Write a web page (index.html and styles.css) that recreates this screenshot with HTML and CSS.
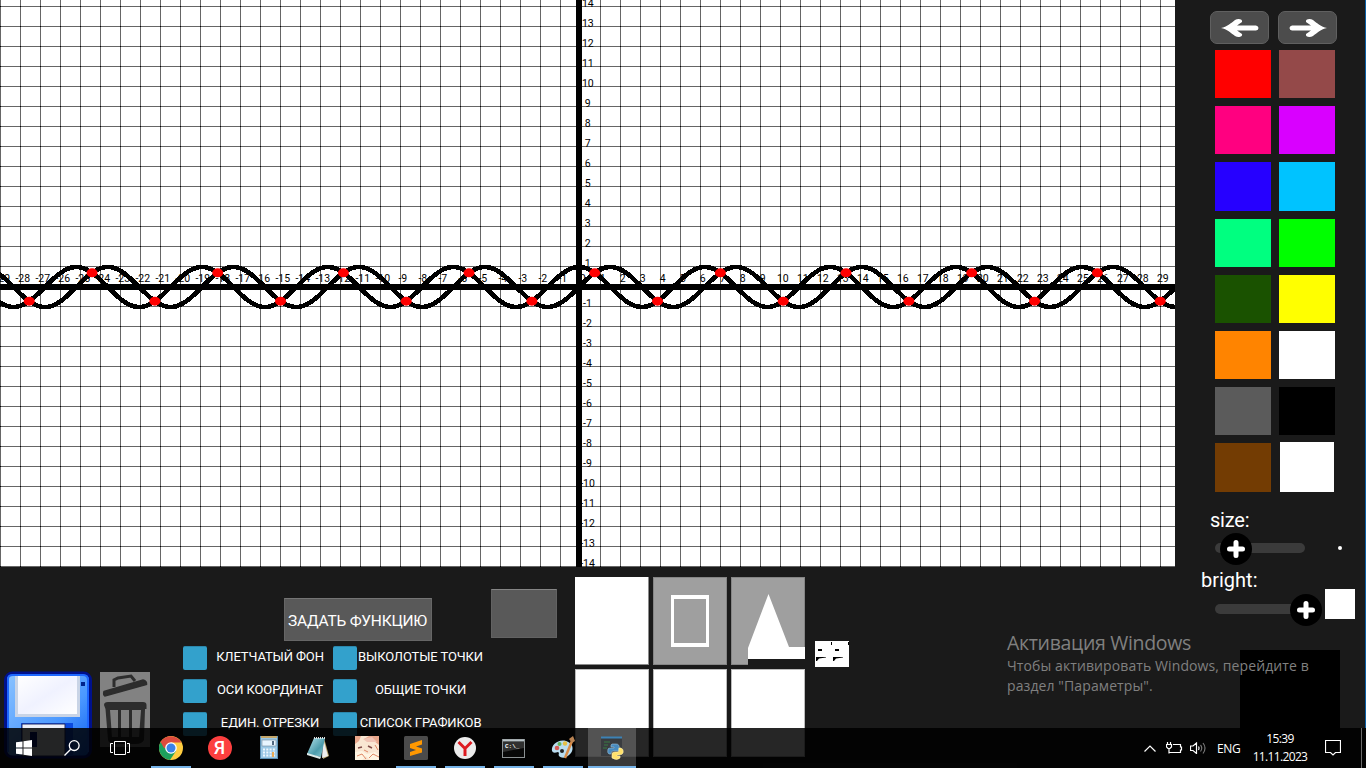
FILE: index.html
```html
<!DOCTYPE html>
<html lang="ru">
<head>
<meta charset="utf-8">
<title>Графики функций</title>
<link rel="stylesheet" href="styles.css">
</head>
<body>
<div class="screen">
  <main class="workspace">
    <svg class="plot" id="plot" width="1175" height="567" viewBox="0 0 1175 567">
      <defs>
        <pattern id="cell" width="20" height="20" patternUnits="userSpaceOnUse" y="6">
          <rect width="20" height="1" class="grid-line"/>
          <rect width="1" height="20" class="grid-line"/>
          <rect width="1" height="1"/>
        </pattern>
      </defs>
      <rect width="1175" height="567" fill="#fff"/>
      <rect width="1175" height="567" fill="url(#cell)"/>
      <rect x="576" width="6" height="567"/>
      <rect y="284" width="1175" height="6"/>
      <g id="labels" class="axis-label"></g>
      <path id="sine" class="curve"/>
      <path id="cosine" class="curve"/>
      <g id="points" class="point"></g>
    </svg>
    <aside class="palette">
      <div class="history">
        <button class="history-btn"><svg width="38" height="20" viewBox="0 0 38 20"><path d="M0 10C6 9 10 5 14 2C17 0 22 1 21 4L16 7.500H35Q37.500 8 37.500 10T35 12.500H16L21 16C22 19 17 20 14 18C10 15 6 11 0 10Z"/></svg></button>
        <button class="history-btn"><svg width="38" height="20" viewBox="0 0 38 20"><path transform="matrix(-1 0 0 1 38 0)" d="M0 10C6 9 10 5 14 2C17 0 22 1 21 4L16 7.500H35Q37.500 8 37.500 10T35 12.500H16L21 16C22 19 17 20 14 18C10 15 6 11 0 10Z"/></svg></button>
      </div>
      <div class="swatches">
        <i class="red"></i><i class="rosewood"></i>
        <i class="pink"></i><i class="magenta"></i>
        <i class="blue"></i><i class="sky"></i>
        <i class="mint"></i><i class="green"></i>
        <i class="forest"></i><i class="yellow"></i>
        <i class="orange"></i><i class="white"></i>
        <i class="gray"></i><i class="black"></i>
        <i class="brown"></i><i class="white current"></i>
      </div>
      <div class="slider-label size-label">size:</div>
      <div class="slider"><div class="track"></div>
        <svg class="knob knob-size" width="32" height="32" viewBox="0 0 32 32"><circle cx="16" cy="16" r="16"/><path d="M16 9.500V22.500M9.500 16H22.500"/></svg>
        <span class="dot"></span></div>
      <div class="slider-label bright-label">bright:</div>
      <div class="slider"><div class="track"></div>
        <svg class="knob knob-bright" width="32" height="32" viewBox="0 0 32 32"><circle cx="16" cy="16" r="16"/><path d="M16 9.500V22.500M9.500 16H22.500"/></svg>
        <span class="sample"></span></div>
    </aside>
  </main>

  <section class="tools">
    <svg class="floppy" width="88" height="88" viewBox="0 0 88 88">
      <defs>
        <linearGradient id="fb" x1="0" y1="0" x2="1" y2="1"><stop offset="0" stop-color="#8cc4ff"/><stop offset=".6" stop-color="#4b98ff"/><stop offset="1" stop-color="#0a5cf0"/></linearGradient>
        <linearGradient id="fl" x1="0" y1="0" x2="1" y2="1"><stop offset="0" stop-color="#fff"/><stop offset=".5" stop-color="#f0f2ff"/><stop offset="1" stop-color="#fff"/></linearGradient>
      </defs>
      <rect x="1.500" y="2" width="85" height="84" rx="7" fill="url(#fb)" stroke="#00118c" stroke-width="3"/>
      <path d="M4 81V8Q4 4 9 4H79Q84 4 84 9V81" fill="none" stroke="#1e68ff" stroke-width="2"/>
      <path d="M11 5H76V46H11Z" fill="#c9d4e6"/><path d="M14 5H73V43H14Z" fill="url(#fl)"/>
      <rect x="77" y="11" width="4" height="4" fill="#00238c"/>
      <path d="M17 52H69V85H17Z" fill="#0b4be0"/><path d="M18 53H61V85H18Z" fill="#eceff8" stroke="#222c66"/>
      <rect x="26" y="61" width="7" height="15" fill="#001a80"/>
    </svg>
    <svg class="trash" width="50" height="75" viewBox="0 0 50 75">
      <rect width="50" height="75" fill="#828282"/>
      <path d="M4 19.500 43 8Q47 9 46.500 12.500L5 24Q3 23 4 19.500Z" fill="#2d2d2d" stroke="#2d2d2d" stroke-width="1.500"/>
      <path d="M14 15V8L18 6 31 4 35 9" fill="none" stroke="#2d2d2d" stroke-width="3"/>
      <path d="M4 33Q4 30 8 30H43Q46.500 30 46.500 33V37H45L44 68Q42 72 36 72H15Q9 72 8 68L5.500 37Z" fill="#2d2d2d"/>
      <path d="M10 38H18V65H12ZM21 38H29V65H21ZM32 38H41L39 65H32Z" fill="#828282"/>
    </svg>
    <div class="controls">
      <button class="define"><span>ЗАДАТЬ ФУНКЦИЮ</span></button>
      <div class="checks">
        <i class="box"></i><span>КЛЕТЧАТЫЙ ФОН</span><i class="box"></i><span>ВЫКОЛОТЫЕ ТОЧКИ</span>
        <i class="box"></i><span>ОСИ КООРДИНАТ</span><i class="box"></i><span>ОБЩИЕ ТОЧКИ</span>
        <i class="box"></i><span>ЕДИН. ОТРЕЗКИ</span><i class="box"></i><span>СПИСОК ГРАФИКОВ</span>
      </div>
    </div>
    <div class="blank"></div>
    <div class="thumbs">
      <div class="thumb"></div>
      <div class="thumb shaded"><svg width="74" height="88"><path fill-rule="evenodd" d="M18 18H56V70H18ZM21 22V66H53V22Z" fill="#fff"/></svg></div>
      <div class="thumb shaded"><svg width="74" height="88"><path d="M17 82H74V88H17Z" fill="#1a1a1a"/><path d="M37.500 17 58 70H74V82H17V71Z" fill="#fff"/></svg></div>
      <div class="thumb"></div><div class="thumb"></div><div class="thumb"></div>
    </div>
    <svg class="stamp" width="34" height="26" viewBox="0 0 34 26"><rect width="34" height="26" fill="#fff"/><path d="M16 1H17V4H16ZM33 1H34V4H33ZM3 8H7V10H3ZM20 8H24V10H20ZM1 16H11V16.500L4 17.500 2 20H1ZM18 16H28V16.500L21 17.500 19 20H18Z"/></svg>
    <div class="preview"></div>
  </section>

  <div class="activation">
    <div class="activation-title">Активация Windows</div>
    <div class="activation-line">Чтобы активировать Windows, перейдите в</div>
    <div class="activation-line">раздел "Параметры".</div>
  </div>

  <footer class="taskbar">
    <div class="sys"><svg width="16" height="16" viewBox="0 0 16 16" fill="#fff"><path d="M0 2.300 6.500 1.400V7.500H0ZM7.500 1.200 16 0V7.500H7.500ZM0 8.500H6.500V14.600L0 13.700ZM7.500 8.500H16V16L7.500 14.800Z"/></svg></div>
    <div class="sys"><svg width="16" height="16" viewBox="0 0 16 16" fill="none" stroke="#fff" stroke-width="1.300"><circle cx="10.200" cy="5.600" r="4.900"/><path d="M6.700 9.200.5 15.500"/></svg></div>
    <div class="sys"><svg width="20" height="14" viewBox="0 0 20 14" fill="none" stroke="#fff"><path d="M4.500.5H15.500V13.500H4.500ZM3 2.500H.5V11.500H3M17 2.500H19.500V11.500H17"/></svg></div>
    <nav class="apps">
      <div class="app open"><svg width="24" height="24" viewBox="0 0 24 24"><circle cx="12" cy="12" r="12" fill="#ffcd40"/><path d="M1.600 6A12 12 0 0 0 11 24L17 15 12 12Z" fill="#1da05d"/><path d="M1.600 6A12 12 0 0 1 22.400 6.500H12V12H5Z" fill="#dd4b3e"/><circle cx="12" cy="12" r="5.800" fill="#fff"/><circle cx="12" cy="12" r="4.500" fill="#3b82e8"/></svg></div>
      <div class="app"><span class="yandex">Я</span></div>
      <div class="app"><svg width="18" height="24" viewBox="0 0 18 24"><rect x=".5" y=".5" width="17" height="22" fill="#9cc8e5" stroke="#5c91b6"/><path d="M1 1H17" stroke="#c4a76c" stroke-width="2"/><rect x="2" y="4" width="14" height="6" fill="#e8f5ff" stroke="#71889a" stroke-width=".6"/><path d="M12 5V9H14V5Z" fill="#516880"/><path d="M3 13.500H15M3 16.500H15M3 19.500H15" stroke="#eef7ff" stroke-width="2" stroke-dasharray="2 1.300"/><path d="M13 16V21" stroke="#e9ab57" stroke-width="2"/></svg></div>
      <div class="app"><svg width="24" height="22" viewBox="0 0 24 22"><defs><linearGradient id="np" x2="1" y2="1"><stop stop-color="#b8e5ee"/><stop offset=".6" stop-color="#4c9cac"/><stop offset="1" stop-color="#8accd6"/></linearGradient></defs><path d="M18 1 23 19 17 22Z" fill="#b9a66d"/><path d="M17 1 22 19 16 21Z" fill="#eee"/><path d="M8 1H19L15 20 1 17Z" fill="url(#np)"/><path d="M1 16 15 20 14 22 1 18Z" fill="#ddebea"/><path d="M8 1H19" stroke="#dedede" stroke-dasharray="1 1" stroke-width="2"/></svg></div>
      <div class="app"><svg width="24" height="24" viewBox="0 0 24 24"><rect width="24" height="24" fill="#f9e6d2"/><path d="M0 0H6L4 5 0 8ZM14 0H24V9L19 5 13 6 9 3Z" fill="#e8a78c"/><path d="M8 3 17 1 22 6 12 6Z" fill="#f1c4b5"/><path d="M3 12 7 11M13 10 17 12" stroke="#824c48" stroke-width="1.500"/><path d="M0 16 7 15 12 18 20 16 24 19V24H15L11 20 7 24H0Z" fill="#fff5e2"/><path d="M2 20 7 18 11 23M14 22 18 18 24 21M9 14 13 16M20 9 23 14" stroke="#df8865" fill="none"/></svg></div>
      <div class="app open"><svg width="24" height="24" viewBox="0 0 24 24"><rect width="24" height="24" rx="1.500" fill="#4b4b4b"/><path d="M6 8 18 4V8.500L12 10.500 18 12.500V16.500L6 20V16L12 14 6 12Z" fill="#ff9800"/></svg></div>
      <div class="app open"><svg width="22" height="22" viewBox="0 0 22 22"><circle cx="11" cy="11" r="11" fill="#ececec"/><path d="M4.500 5 11 11.500 17.500 5M11 11V19" fill="none" stroke="#dd1c22" stroke-width="3"/></svg></div>
      <div class="app open"><svg width="23" height="19" viewBox="0 0 23 19"><rect x=".5" y=".5" width="22" height="18" fill="#080808" stroke="#8b9193"/><path d="M1 1.500H22" stroke="#b8c2c7" stroke-width="2"/><path d="M1 3H22V9L1 13Z" fill="#303030"/><text x="3" y="9" class="cmd-text">C:\_</text></svg></div>
      <div class="app open"><svg width="24" height="24" viewBox="0 0 24 24"><path d="M1 15C0 9 7 3 15 5C22 7 23 13 20 17C16 22 11 23 8 20C7 18 9 17 7 16Q2 18 1 15Z" fill="#b9dcef"/><circle cx="6" cy="12" r="2.300" fill="#d65b55"/><circle cx="8.500" cy="8" r="2" fill="#62b45d"/><circle cx="14" cy="7.500" r="2.200" fill="#e7be42"/><circle cx="11" cy="15" r="2" fill="#222"/><path d="M14 22 21 5" stroke="#d88b47" stroke-width="2.500"/><path d="M18 3 22 0 24 5 21 7Z" fill="#b98353"/></svg></div>
      <div class="app open active"><svg width="24" height="24" viewBox="0 0 24 24"><path d="M1 1H22V20H1Z" fill="#393c40"/><path d="M1 1.500H22" stroke="#3d82b5" stroke-width="2"/><path d="M4 6H10M4 9H8M3 12H7" stroke="#387b43"/><path d="M12 8H16Q20 8 19 13V15H13Q11 15 11 18H9Q7 17 8 13Q8 12 12 12H14V11H11V9Z" fill="#488abe" stroke="#9ac1d9" stroke-width=".6"/><path d="M19 12H21Q24 13 23 17Q22 19 19 19H17V20H20V22Q17 25 12 22V18Q12 16 15 16H18Q19 15 19 12Z" fill="#ffe16b" stroke="#fff2b1" stroke-width=".6"/></svg></div>
    </nav>
    <div class="tray">
      <svg class="chev" width="12" height="7" viewBox="0 0 12 7"><path d="M.5 6.500 6 1 11.500 6.500"/></svg>
      <svg class="power" width="17" height="12" viewBox="0 0 17 12"><path d="M1.500 0V2M4.500 0V2M.5 2.500H5.500V5L4 6.500H2L.5 5ZM3 6.500V11.500M3 10.500H14.500V8H15.500V5H14.500V2.500H7"/></svg>
      <svg class="sound" width="17" height="12" viewBox="0 0 17 12"><path d="M.5 4H3L6.500 1V11.500L3 8.500H.5ZM8.500 4.500Q9.500 6 8.500 8"/><path class="quiet" d="M10.500 3Q13 6 10.500 9.500M13 1Q17 6 13 11.500"/></svg>
      <span class="lang">ENG</span>
      <div class="clock"><span>15:39</span><span>11.11.2023</span></div>
      <svg class="note" width="16" height="16" viewBox="0 0 16 16"><path d="M.5.5H15.500V12.500H10.500L8 15 5.500 12.500H.5Z"/></svg>
      <span class="peek"></span>
    </div>
  </footer>
</div>
<script src="script.js"></script>
</body>
</html>
```
FILE: styles.css
```css
* { box-sizing: border-box; }
body { margin: 0; background: #1a1a1a; font-family: Roboto, sans-serif; color: #fff; }
.screen { position: relative; width: 1366px; height: 768px; overflow: hidden; display: flex; flex-direction: column; }
.workspace { display: flex; height: 567px; }
.plot { flex: none; display: block; }
.grid-line { fill: #000; fill-opacity: .6; }
.axis-label { font: 10.500px Roboto, sans-serif; text-anchor: middle; }
.curve { fill: none; stroke: #000; stroke-width: 4.600; shape-rendering: crispEdges; }
.point { fill: #f00; }
button { border: 0; padding: 0; color: #fff; font-family: inherit; }

.palette { width: 191px; padding: 11px 0 0 35px; display: flex; flex-direction: column; }
.screen::after { content: ""; position: absolute; right: 0; top: 0; width: 1px; height: 728px; background: #0a5fa5; }
.history { display: flex; gap: 9px; }
.history-btn { width: 59px; height: 33px; border-radius: 7px; background: #4c4c4c; border: 1px solid #606060; display: grid; place-items: center; fill: #fff; }
.swatches { margin: 6px 0 0 5px; display: grid; grid-template-columns: 56px 56px; grid-auto-rows: 48.300px; gap: 7.900px 8px; }
.red { background: #f00; } .rosewood { background: #944949; } .pink { background: #ff0080; } .magenta { background: #d900ff; }
.blue { background: #2600ff; } .sky { background: #00c3ff; } .mint { background: #00ff80; } .green { background: #0f0; }
.forest { background: #1a5200; } .yellow { background: #ff0; } .orange { background: #ff8400; } .white { background: #fff; }
.gray { background: #5b5b5b; } .black { background: #000; } .brown { background: #733c03; }
.current { margin: -1px 1px 0; }
.slider-label { font-size: 20px; line-height: 24px; height: 24px; }
.size-label { margin-top: 16px; letter-spacing: -.2px; }
.bright-label { margin: 15px 0 0 -9px; }
.slider { position: relative; height: 10px; margin: 11px 0 0 5px; }
.bright-label + .slider { margin-top: 12px; }
.track { width: 90px; height: 10px; border-radius: 5px; background: #3b3b3b; }
.knob { position: absolute; top: -10px; stroke-linecap: round; }
.knob path { stroke: #fff; stroke-width: 5; }
.knob-size { left: 5px; } .knob-bright { left: 75px; }
.dot { position: absolute; left: 123px; top: 3px; width: 4px; height: 4px; border-radius: 2px; background: #fff; }
.sample { position: absolute; left: 110px; top: -15px; width: 30px; height: 30px; background: #fff; }

.tools { height: 201px; padding-left: 4px; display: flex; align-items: flex-start; }
.floppy { margin-top: 104px; }
.trash { margin: 105px 33px 0 8px; }
.controls { width: 301px; padding-top: 31px; }
.define { display: block; width: 148px; height: 43px; margin-left: 100.500px; padding-top: 2px; background: #595959; border: 1px solid #666; border-top-color: #757575; font-size: 15.500px; letter-spacing: -.25px; white-space: nowrap; }
.checks { margin-top: 5px; display: grid; grid-template-columns: 24px 126px 24px 127px; row-gap: 9px; font-size: 13px; line-height: 22px; letter-spacing: -.12px; text-align: center; white-space: nowrap; }
.box { height: 24px; border-radius: 2px; background: #33a1cc; border-top: 1px solid #2b87ac; }
.blank { width: 66px; height: 49px; margin: 22px 18px 0 7px; background: #595959; border: 1px solid #626262; border-top-color: #858585; }
.thumbs { margin-top: 10px; display: grid; grid-template-columns: repeat(3, 74px); grid-auto-rows: 88px; gap: 4px; }
.thumb { background: #fff; box-shadow: inset 0 0 0 1px #bcbcbc; }
.thumb:first-child { box-shadow: inset -1px -1px 0 #8b8b8b; }
.shaded { background: #9f9f9f; box-shadow: inset 0 0 0 1px #858585; }
.thumb svg { display: block; }
.stamp { margin: 74px 0 0 10px; }
.preview { width: 100px; height: 100px; margin: 83px 0 0 391px; background: #000; }

.activation { position: absolute; left: 1007px; top: 630px; color: #808080; font-family: "Open Sans", sans-serif; white-space: nowrap; }
.activation-title { font-size: 19.500px; line-height: 26px; letter-spacing: -.32px; }
.activation-line { font-size: 14px; line-height: 20px; letter-spacing: .1px; }

.taskbar { position: absolute; left: 0; top: 728px; width: 1366px; height: 40px; background: rgba(0, 0, 0, .85); display: flex; font-family: "Open Sans", sans-serif; }
.sys { width: 48px; height: 40px; display: grid; place-items: center; }
.apps { display: flex; margin-left: 2px; }
.app { position: relative; width: 49px; height: 40px; display: grid; place-items: center; }
.open::after { content: ""; position: absolute; left: 5px; bottom: 0; width: 40px; height: 2px; background: #76b3e8; }
.active::before { content: ""; position: absolute; left: 1px; top: 0; width: 48px; height: 40px; background: rgba(255, 255, 255, .21); }
.active::after { left: 1px; width: 48px; }
.active svg { position: relative; }
.yandex { width: 24px; height: 24px; border-radius: 50%; background: #fc3f3f; font: 500 18px/24px Roboto, sans-serif; text-align: center; }
.cmd-text { font: 700 6px "Liberation Mono", monospace; fill: #fff; }
.tray { margin-left: auto; display: flex; align-items: center; font-size: 12px; }
.tray svg { fill: none; stroke: #fff; stroke-width: 1.200; }
.chev { margin-right: 10px; }
.power { margin-right: 7px; }
.sound .quiet { stroke: #777; }
.lang { margin-left: 10px; width: 24px; letter-spacing: -.4px; }
.clock { width: 78px; margin-right: 2px; display: flex; flex-direction: column; align-items: center; line-height: 18px; letter-spacing: -.65px; }
.note { margin-left: 4px; }
.peek { width: 1px; height: 40px; margin-left: 20px; margin-right: 4px; background: #6b6b6b; }
```
FILE: script.js
```js
const NS = "http://www.w3.org/2000/svg";
const X0 = 579, Y0 = 287, UNIT = 20;

function add(parent, name, attrs, text) {
  const el = document.createElementNS(NS, name);
  for (const key in attrs) el.setAttribute(key, attrs[key]);
  if (text !== undefined) el.textContent = text;
  document.getElementById(parent).appendChild(el);
}

for (let n = -29; n <= 29; n++) {
  add("labels", "text", { x: X0 + n * UNIT + 3.8, y: 282 }, n);
}
for (let n = -14; n <= 14; n++) {
  if (n) add("labels", "text", { x: n < 0 ? 587.5 : 587.8, y: Y0 - n * UNIT }, n);
}

function trace(fn) {
  let d = "";
  for (let x = -2; x <= 1177; x += 2) {
    d += (d ? "L" : "M") + x + " " + (Y0 - UNIT * fn((x - X0) / UNIT)).toFixed(1);
  }
  return d;
}
document.getElementById("sine").setAttribute("d", trace(Math.sin));
document.getElementById("cosine").setAttribute("d", trace(Math.cos));

for (let k = -9; k <= 9; k++) {
  const t = Math.PI / 4 + k * Math.PI;
  add("points", "ellipse", { cx: X0 + t * UNIT, cy: Y0 - UNIT * Math.sin(t), rx: 5.5, ry: 4.5 });
}
```
